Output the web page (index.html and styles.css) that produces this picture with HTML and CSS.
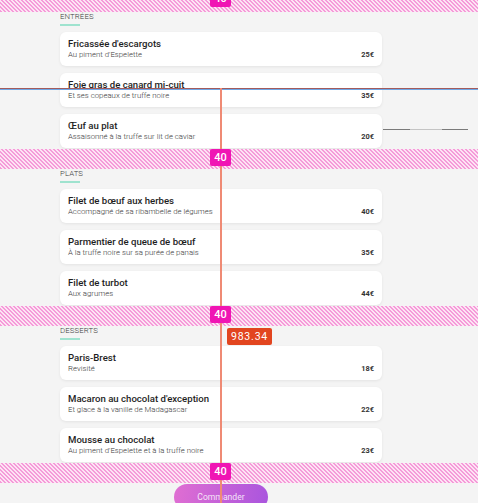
FILE: index.html
```html
<!DOCTYPE html>
<html lang="fr">
<head>
<meta charset="utf-8">
<title>Menu</title>
<link rel="stylesheet" href="styles.css">
</head>
<body>
<div class="page">
  <div class="band band-top"><span class="gap-badge">40</span></div>

  <section class="section">
    <h2 class="section-title">ENTRÉES</h2>
    <div class="cards">
      <div class="card"><div class="card-text"><div class="dish">Fricassée d'escargots</div><div class="desc">Au piment d'Espelette</div></div><div class="price">25€</div></div>
      <div class="card"><div class="card-text"><div class="dish">Foie gras de canard mi-cuit</div><div class="desc">Et ses copeaux de truffe noire</div></div><div class="price">35€</div></div>
      <div class="card"><div class="card-text"><div class="dish">Œuf au plat</div><div class="desc">Assaisonné à la truffe sur lit de caviar</div></div><div class="price">20€</div></div>
    </div>
  </section>

  <div class="band"><span class="gap-badge">40</span></div>

  <section class="section">
    <h2 class="section-title">PLATS</h2>
    <div class="cards">
      <div class="card"><div class="card-text"><div class="dish">Filet de bœuf aux herbes</div><div class="desc">Accompagné de sa ribambelle de légumes</div></div><div class="price">40€</div></div>
      <div class="card"><div class="card-text"><div class="dish">Parmentier de queue de bœuf</div><div class="desc">À la truffe noire sur sa purée de panais</div></div><div class="price">35€</div></div>
      <div class="card"><div class="card-text"><div class="dish">Filet de turbot</div><div class="desc">Aux agrumes</div></div><div class="price">44€</div></div>
    </div>
  </section>

  <div class="band"><span class="gap-badge">40</span></div>

  <section class="section">
    <h2 class="section-title">DESSERTS</h2>
    <div class="cards">
      <div class="card"><div class="card-text"><div class="dish">Paris-Brest</div><div class="desc">Revisité</div></div><div class="price">18€</div></div>
      <div class="card"><div class="card-text"><div class="dish">Macaron au chocolat d'exception</div><div class="desc">Et glace à la vanille de Madagascar</div></div><div class="price">22€</div></div>
      <div class="card"><div class="card-text"><div class="dish">Mousse au chocolat</div><div class="desc">Au piment d'Espelette et à la truffe noire</div></div><div class="price">23€</div></div>
    </div>
  </section>

  <div class="band"><span class="gap-badge">40</span></div>

  <div class="actions"><button class="order-btn">Commander</button></div>

  <div class="guide-h guide-red"></div>
  <div class="guide-h guide-blue"></div>
  <div class="guide-v"></div>
  <div class="guide-short"><span class="guide-short-mid"></span></div>
  <span class="measure-badge">983.34</span>
</div>
</body>
</html>
```

FILE: styles.css
```css
html, body {
  margin: 0;
  padding: 0;
}
body {
  background: #f4f4f4;
  font-family: Roboto, "Noto Sans", "Liberation Sans", sans-serif;
  color: #222;
  overflow: hidden;
}
.page {
  position: relative;
  display: flow-root;
  min-height: 503px;
}
.band {
  position: relative;
  height: 20px;
  background: repeating-linear-gradient(45deg, #f59bd9 0 1.5px, #fde4f4 1.5px 2.83px);
}
.band-top {
  margin-top: -8px;
}
.gap-badge {
  position: absolute;
  left: 210px;
  top: 0;
  width: 21px;
  height: 17px;
  background: #f015b4;
  color: #fff;
  border-radius: 2px;
  font-size: 11px;
  line-height: 17px;
  text-align: center;
  font-weight: 500;
  z-index: 5;
}
.band-top .gap-badge {
  top: -2px;
}
.section {
  margin-left: 60px;
  width: 322px;
  padding-bottom: 1px;
}
.section-title {
  margin: 0;
  font-size: 7.8px;
  line-height: 10px;
  font-weight: 300;
  color: #3c3c3c;
  letter-spacing: 0.1px;
}
.section-title::after {
  content: "";
  display: block;
  width: 20px;
  height: 2px;
  margin-top: 2px;
  background: #9fe3cf;
}
.cards {
  display: flex;
  flex-direction: column;
  gap: 7px;
  margin-top: 6px;
}
.card {
  display: flex;
  align-items: flex-end;
  justify-content: space-between;
  height: 34px;
  box-sizing: border-box;
  padding: 6px 8px 6px 8px;
  background: #fff;
  border-radius: 6px;
  box-shadow: 0 1px 3px rgba(0, 0, 0, 0.07);
}
.dish {
  font-size: 9.6px;
  line-height: 11px;
  font-weight: 500;
  color: #1e1e1e;
}
.desc {
  margin-top: 1px;
  font-size: 7.8px;
  line-height: 10px;
  font-weight: 300;
  color: #383838;
}
.price {
  font-size: 7.4px;
  line-height: 10px;
  font-weight: 700;
  color: #333;
}
.actions {
  padding-top: 1px;
  padding-left: 174px;
}
.order-btn {
  display: block;
  width: 94px;
  height: 26px;
  border: 0;
  border-radius: 13px;
  background: linear-gradient(100deg, #e06ed2, #a955de);
  color: rgba(255, 255, 255, 0.85);
  font-family: Roboto, "Noto Sans", sans-serif;
  font-size: 8.6px;
  padding: 0;
}
.guide-h {
  position: absolute;
  left: 0;
  width: 478px;
  height: 1px;
  z-index: 4;
}
.guide-red {
  top: 88px;
  background: #a45c5c;
}
.guide-blue {
  top: 89px;
  background: #6ea6e6;
}
.guide-v {
  position: absolute;
  left: 220px;
  top: 88px;
  width: 2px;
  height: 420px;
  background: #ef8a74;
  z-index: 4;
}
.guide-short {
  position: absolute;
  left: 383px;
  top: 129px;
  width: 85px;
  height: 1px;
  background: #7a7a7a;
}
.guide-short-mid {
  position: absolute;
  left: 27px;
  width: 32px;
  height: 1px;
  background: #c4c4c4;
}
.measure-badge {
  position: absolute;
  left: 227px;
  top: 328px;
  width: 45px;
  height: 17px;
  background: #e2451f;
  color: #fff;
  border-radius: 2px;
  font-family: Roboto, "DejaVu Sans", sans-serif;
  font-size: 10.5px;
  line-height: 17px;
  text-align: center;
  letter-spacing: 0.8px;
  z-index: 6;
}
```
